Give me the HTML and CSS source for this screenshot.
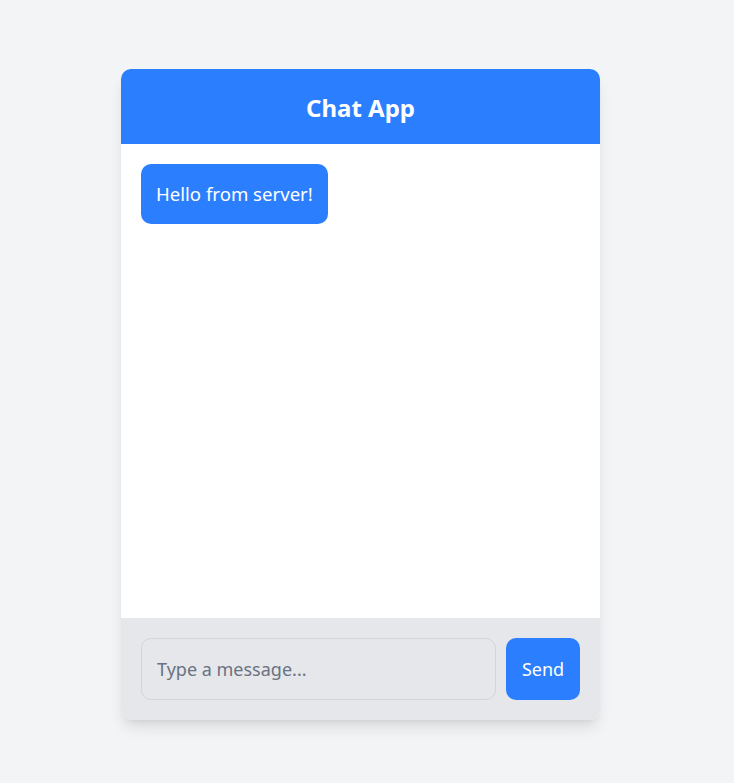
FILE: index.html
```html
<!DOCTYPE html>
<html>
<head>
<meta charset="utf-8">
<link rel="stylesheet" href="styles.css">
</head>
<body>
<div class="page">
  <div class="card">
    <div class="header">Chat App</div>
    <div class="messages">
      <div class="bubble">Hello from server!</div>
    </div>
    <div class="footer">
      <input class="input" type="text" placeholder="Type a message...">
      <button class="send">Send</button>
    </div>
  </div>
</div>
</body>
</html>
```
FILE: styles.css
```css
html, body {
  margin: 0;
  padding: 0;
  background: #f3f4f6;
  font-family: "Noto Sans", "Open Sans", sans-serif;
}
.page {
  padding: 69px 0 0 121px;
  height: 783px;
  box-sizing: border-box;
}
.card {
  width: 479px;
  background: #ffffff;
  border-radius: 10px;
  overflow: hidden;
  box-shadow: 0 10px 15px -3px rgba(0,0,0,0.1), 0 4px 6px -4px rgba(0,0,0,0.1);
  display: flex;
  flex-direction: column;
}
.header {
  background: #2b7fff;
  color: #ffffff;
  height: 75px;
  padding-top: 2px;
  box-sizing: border-box;
  display: flex;
  align-items: center;
  justify-content: center;
  font-size: 24px;
  font-weight: 700;
}
.messages {
  height: 474px;
  padding: 20px;
  box-sizing: border-box;
  display: flex;
  flex-direction: column;
  align-items: flex-start;
}
.bubble {
  background: #2b7fff;
  color: #ffffff;
  font-size: 18.6px;
  line-height: 28px;
  padding: 16px 15px;
  border-radius: 10px;
}
.footer {
  background: #e5e7eb;
  padding: 20px;
  display: flex;
  gap: 10px;
}
.input {
  flex: 1;
  height: 62px;
  box-sizing: border-box;
  border: 1px solid #d1d5dc;
  border-radius: 10px;
  background: #e5e7eb;
  padding: 0 15px;
  font-family: inherit;
  font-size: 18px;
  color: #111827;
  outline: none;
}
.input::placeholder {
  color: #6a7282;
}
.send {
  width: 74px;
  height: 62px;
  border: none;
  border-radius: 10px;
  background: #2b7fff;
  color: #ffffff;
  font-family: inherit;
  font-size: 18px;
  padding: 0;
}
```
